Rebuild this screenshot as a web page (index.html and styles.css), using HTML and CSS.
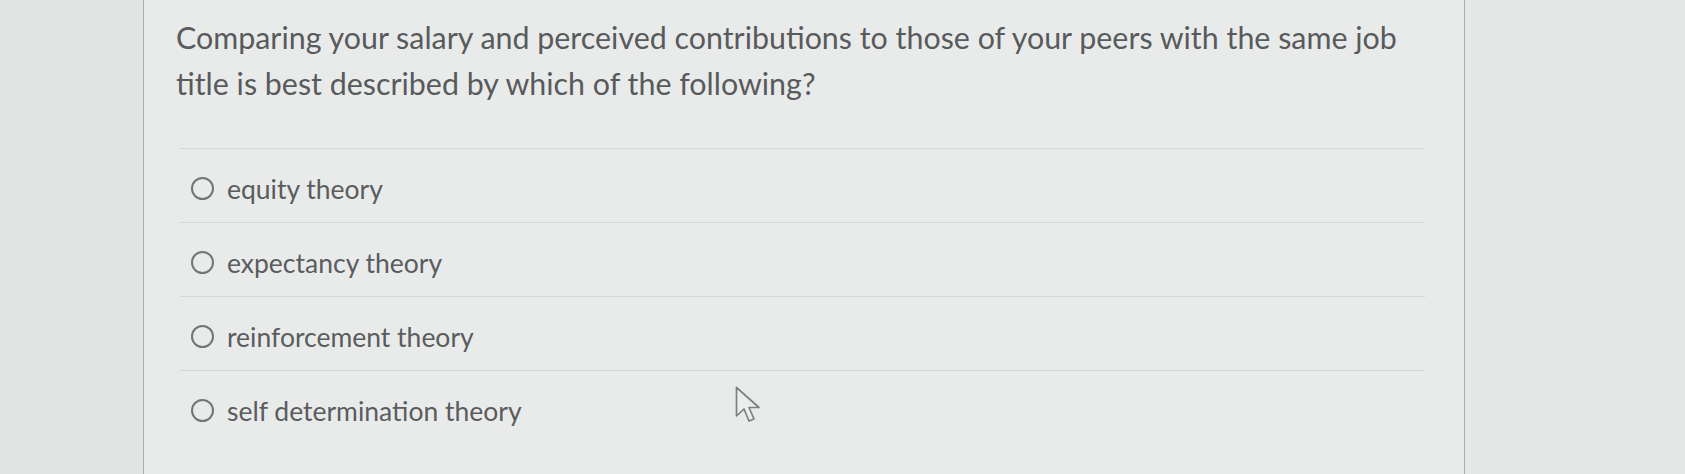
FILE: index.html
```html
<!DOCTYPE html>
<html lang="en">
<head>
<meta charset="utf-8">
<title>Quiz question</title>
<link rel="stylesheet" href="styles.css">
</head>
<body>
<div class="screen">
  <div class="side side-left"></div>
  <main class="panel">
    <div class="question">Comparing your salary and perceived contributions to those of your peers with the same job title is best described by which of the following?</div>
    <ul class="answers">
      <li class="answer"><span class="radio"></span><span class="label">equity theory</span></li>
      <li class="answer"><span class="radio"></span><span class="label">expectancy theory</span></li>
      <li class="answer"><span class="radio"></span><span class="label">reinforcement theory</span></li>
      <li class="answer"><span class="radio"></span><span class="label">self determination theory</span></li>
    </ul>
    <svg class="cursor" width="28" height="40" viewBox="0 0 28 40" aria-hidden="true">
      <path d="M1.5 1.5 L1.5 30 L9 23 L14 35 L19 33 L14 21.5 L24 21.5 Z" fill="#eceeed" stroke="#7d7f81" stroke-width="1.7" stroke-linejoin="round"/>
    </svg>
  </main>
  <div class="side side-right"></div>
</div>
</body>
</html>
```

FILE: styles.css
```css
html, body {
  margin: 0;
  padding: 0;
}
body {
  width: 1685px;
  height: 474px;
  overflow: hidden;
  background: #e3e5e4;
  font-family: Lato, "Open Sans", "Liberation Sans", sans-serif;
}
.screen {
  display: flex;
  height: 474px;
}
.side-left {
  width: 143px;
  flex: none;
  background: #e2e4e3;
}
.side-right {
  flex: 1;
  background: #e6e8e7;
}
.panel {
  position: relative;
  width: 1322px;
  flex: none;
  background: #e9ebea;
  border-left: 1px solid #abafb0;
  border-right: 1px solid #a9adae;
  padding: 14px 0 0 32px;
  box-sizing: border-box;
}
.question {
  width: 1245px;
  font-size: 30.4px;
  line-height: 46px;
  color: #585a5c;
}
.answers {
  list-style: none;
  margin: 42px 39px 0 4px;
  padding: 0;
}
.answer {
  display: flex;
  align-items: center;
  height: 74px;
  border-top: 1px solid #d4d6d5;
  box-sizing: border-box;
  padding: 6px 0 0 11px;
}
.radio {
  width: 19px;
  height: 19px;
  border: 2px solid #727476;
  border-radius: 50%;
  flex: none;
}
.label {
  margin-left: 13px;
  font-size: 26.5px;
  color: #5a5c5e;
}
.cursor {
  position: absolute;
  left: 591px;
  top: 386px;
}
```
